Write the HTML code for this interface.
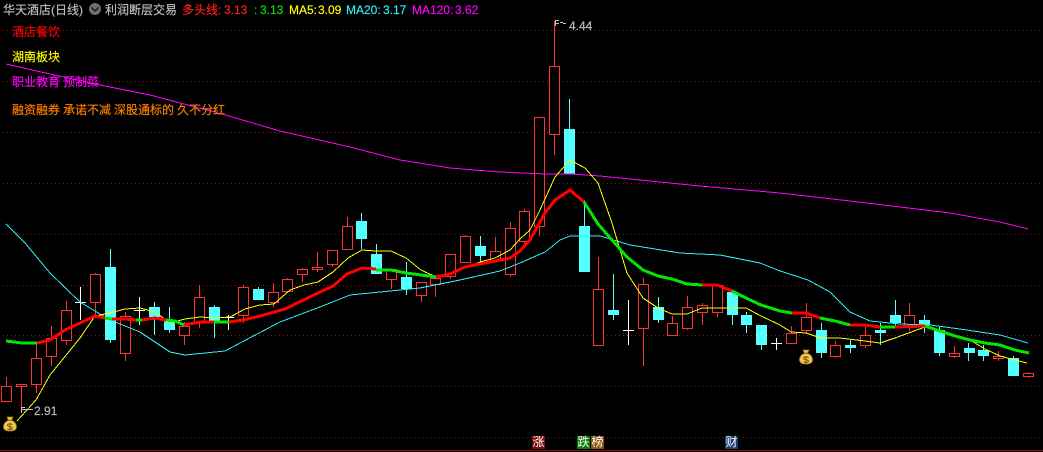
<!DOCTYPE html>
<html><head><meta charset="utf-8"><style>
html,body{margin:0;padding:0;background:#000;width:1043px;height:452px;overflow:hidden}
svg{position:absolute;left:0;top:0}
.t{position:absolute;white-space:pre;word-spacing:-.33px;-webkit-text-stroke:.15px currentColor;font:12px/14px "Liberation Sans","Noto Sans CJK SC",sans-serif}
.b{position:absolute;top:436px;width:13px;height:13px;color:#fff;text-align:center;font:12px/13px "Liberation Sans","Noto Sans CJK SC",sans-serif}
</style></head><body>
<svg width="1043" height="452" viewBox="0 0 1043 452" fill="none" shape-rendering="crispEdges">
<path stroke="#8a0f0f" stroke-dasharray="1 3" d="M3 30.5H1043M3 81.5H1043M3 132.5H1043M3 183.5H1043M3 234.5H1043M3 285.5H1043M3 335.5H1043M3 386.5H1043M3 437.5H1043"/>
<path stroke="#a00000" d="M0 450.5H1043"/>
<!-- red wicks -->
<path stroke="#ff3232" d="M6.5 377V386M21.5 387V409M36.5 342V393M51.5 326V366M66.5 301V345M95.5 273V318M125.5 312V361M184.5 322V345M199.5 285V328M243.5 285V323M273.5 283V307M287.5 278V293M302.5 268V282M317.5 252V272M332.5 250V267M347.5 217V250M391.5 269V289M421.5 282V302M435.5 275V297M450.5 254V279M465.5 235V263M495.5 237V261M510.5 222V277M524.5 209V247M539.5 117V236M554.5 21V155M598.5 257V346M643.5 278V366M672.5 316V336M687.5 296V330M702.5 303V325M717.5 285V317M791.5 326V344M806.5 303V333M835.5 341V358M865.5 325V348M909.5 303V331M954.5 346V358M998.5 351V361M1028.5 372V378"/>
<!-- red bodies -->
<path stroke="#ff3232" fill="#000" d="M1.5 386.5h10v15h-10zM16.5 384.5h10v2h-10zM31.5 358.5h10v26h-10zM46.5 338.5h10v18h-10zM61.5 310.5h10v30h-10zM90.5 274.5h10v28h-10zM120.5 316.5h10v37h-10zM179.5 326.5h10v9h-10zM194.5 297.5h10v25h-10zM238.5 287.5h10v28h-10zM268.5 292.5h10v10h-10zM282.5 279.5h10v12h-10zM297.5 269.5h10v5h-10zM312.5 267.5h10v2h-10zM327.5 250.5h10v14h-10zM342.5 226.5h10v23h-10zM386.5 269.5h10v10h-10zM416.5 282.5h10v13h-10zM430.5 278.5h10v6h-10zM445.5 254.5h10v22h-10zM460.5 236.5h10v26h-10zM490.5 251.5h10v9h-10zM505.5 228.5h10v46h-10zM519.5 211.5h10v30h-10zM534.5 117.5h10v109h-10zM549.5 66.5h10v68h-10zM593.5 289.5h10v56h-10zM638.5 284.5h10v44h-10zM667.5 323.5h10v12h-10zM682.5 307.5h10v21h-10zM697.5 305.5h10v7h-10zM712.5 285.5h10v27h-10zM786.5 333.5h10v10h-10zM801.5 317.5h10v13h-10zM830.5 345.5h10v11h-10zM860.5 335.5h10v10h-10zM904.5 315.5h10v12h-10zM949.5 353.5h10v3h-10zM993.5 356.5h10v2h-10zM1023.5 373.5h10v3h-10z"/>
<!-- cyan wicks -->
<path stroke="#54ffff" d="M110.5 249V343M154.5 302V335M169.5 307V333M214.5 305V338M258.5 287V300M361.5 213V249M376.5 244V274M406.5 262V295M480.5 236V262M569.5 99V174M584.5 200V272M613.5 274V320M658.5 297V323M732.5 292V325M746.5 312V333M761.5 325V350M821.5 323V358M850.5 340V353M880.5 323V345M895.5 300V327M924.5 315V333M939.5 327V356M968.5 343V361M983.5 345V361M1013.5 356V376"/>
<!-- cyan bodies -->
<path fill="#54ffff" d="M105 267h11v73h-11zM149 307h11v10h-11zM164 321h11v9h-11zM209 307h11v14h-11zM253 289h11v11h-11zM356 221h11v18h-11zM371 254h11v20h-11zM401 277h11v12h-11zM475 246h11v10h-11zM564 129h11v45h-11zM579 226h11v46h-11zM608 310h11v5h-11zM653 307h11v13h-11zM727 292h11v23h-11zM741 315h11v10h-11zM756 325h11v20h-11zM816 330h11v23h-11zM845 345h11v3h-11zM875 330h11v3h-11zM890 315h11v8h-11zM919 320h11v5h-11zM934 330h11v23h-11zM964 348h11v5h-11zM978 350h11v6h-11zM1008 358h11v18h-11z"/>
<!-- white crosses -->
<path stroke="#fff" d="M80.5 287V320M75 302.5H86M139.5 297V325M134 310.5H145M228.5 315V330M223 317.5H234M628.5 300V345M623 330.5H634M776.5 338V350M771 343.5H782"/>
<!-- MA120 -->
<polyline stroke="#ff00ff" stroke-width="1" points="6,64 50,74 100,85 150,95 222,114 280,131 350,147 400,160 450,168 500,172 546,174 570,174 600,176 650,181 700,186 780,193 850,201 900,207 950,213 1000,222 1028,229"/>
<!-- MA20 -->
<polyline stroke="#2ff0f8" points="6,224 25,243 50,273 80,302 110,320 140,332 170,352 185,355 225,351 259,333 280,322 320,307 350,295 380,292 420,288 460,280 500,271 520,263 545,252 560,240 570,236 600,236 630,245 680,253 720,255 760,263 780,271 808,280 830,292 850,312 870,321 900,324 930,325 960,329 1000,335 1028,343"/>
<!-- MA5 -->
<polyline stroke="#ffff00" points="17,421 36,400 50,375 80,338 95,316 110,313 125,309 140,308 155,312 170,323 185,319 200,317 215,318 230,317 245,309 260,305 274,304 290,290 304,285 318,282 333,272 348,258 362,250 376,251 391,251 406,258 421,270 436,277 450,275 465,268 480,262 495,258 510,250 520,239 530,230 540,210 555,177 570,160 585,168 598,183 612,223 627,273 643,298 658,308 672,314 687,314 702,308 717,308 746,308 761,316 780,325 791,332 806,333 821,338 840,338 865,341 880,343 895,338 925,327 940,331 970,340 985,349 1000,356 1015,360 1027,363"/>
<!-- Trend line -->
<g stroke-width="3" stroke-linejoin="round">
<polyline stroke="#00e600" points="6,341 22,343 37,343"/>
<polyline stroke="#ff0000" points="37,343 50,340 65,330 80,323 95,316 105,318"/>
<polyline stroke="#00e600" points="105,318 112,319"/>
<polyline stroke="#ff0000" points="112,319 125,319 136,320"/>
<polyline stroke="#00e600" points="136,320 142,320"/>
<polyline stroke="#ff0000" points="142,320 155,318 166,320"/>
<polyline stroke="#00e600" points="166,320 175,321 184,325"/>
<polyline stroke="#ff0000" points="184,325 200,322 214,322"/>
<polyline stroke="#00e600" points="214,322 229,322"/>
<polyline stroke="#ff0000" points="229,322 243,320 260,316 285,309 318,293 333,286 347,274 362,268 376,269"/>
<polyline stroke="#00e600" points="376,270 391,270 406,273 421,275 436,277"/>
<polyline stroke="#ff0000" points="436,277 450,274 465,267 480,264 495,261 510,258 520,251 530,240 545,213 555,200 570,190 584,202"/>
<polyline stroke="#00e600" points="584,202 598,224 612,240 627,257 643,270 658,276 672,279 687,284 702,285"/>
<polyline stroke="#ff0000" points="702,285 717,285 732,291"/>
<polyline stroke="#00e600" points="732,291 746,298 761,305 780,311 792,313"/>
<polyline stroke="#ff0000" points="792,313 806,313 820,318"/>
<polyline stroke="#00e600" points="820,318 835,321 850,325"/>
<polyline stroke="#ff0000" points="850,325 865,325 880,327"/>
<polyline stroke="#00e600" points="880,327 895,327"/>
<polyline stroke="#ff0000" points="895,327 925,326"/>
<polyline stroke="#00e600" points="925,326 940,331 955,336 970,340 985,343 1000,345 1015,350 1029,353"/>
</g>
<!-- markers -->
<path stroke="#c8c8c8" d="M555 20.5H559M555.5 20V26M556 23.5H559M560 22.5H563M563 23.5H566"/>
<path stroke="#c8c8c8" d="M21.5 407V413M22 409.5H33M22 407.5H25"/>
<!-- circle icon -->
<circle cx="95" cy="9" r="6" fill="#6e6e6e" shape-rendering="auto"/>
<path d="M91.5 7.5L95 11L98.5 7.5" stroke="#1a1a1a" stroke-width="1.5" shape-rendering="auto"/>
<!-- money bags -->
<g shape-rendering="auto">
<path d="M7 417h6l-1.5 3.2c3.2 1.4 5 3.6 5 6.5 0 3-2.6 4.3-6.5 4.3s-6.5-1.3-6.5-4.3c0-2.9 1.8-5.1 5-6.5z" fill="#f0c850" stroke="#a87a18" stroke-width=".8"/>
<path d="M7.5 420.3h5" stroke="#7a5510"/>
<path d="M12.5 424.5c-1-1-5-1-5 .8 0 2 5 .8 5 2.8 0 1.6-4 1.6-5 .6M10 423v7.5" stroke="#7a4a10" stroke-width="1"/>
</g>
<g shape-rendering="auto" transform="translate(796,-67)">
<path d="M7 417h6l-1.5 3.2c3.2 1.4 5 3.6 5 6.5 0 3-2.6 4.3-6.5 4.3s-6.5-1.3-6.5-4.3c0-2.9 1.8-5.1 5-6.5z" fill="#f0c850" stroke="#a87a18" stroke-width=".8"/>
<path d="M7.5 420.3h5" stroke="#7a5510"/>
<path d="M12.5 424.5c-1-1-5-1-5 .8 0 2 5 .8 5 2.8 0 1.6-4 1.6-5 .6M10 423v7.5" stroke="#7a4a10" stroke-width="1"/>
</g>
</svg>

<div class="t" style="left:3px;top:3px;color:#c0c0c0">华天酒店(日线)</div>
<div class="t" style="left:105px;top:3px;color:#c0c0c0">利润断层交易</div>
<div class="t" style="left:182px;top:3px;color:#ff2020">多头线:</div>
<div class="t" style="left:224px;top:3px;color:#ff2020">3.13</div>
<div class="t" style="left:254px;top:3px;color:#00e600">:</div>
<div class="t" style="left:260px;top:3px;color:#00e600">3.13</div>
<div class="t" style="left:289px;top:3px;color:#ffff00">MA5:</div>
<div class="t" style="left:318px;top:3px;color:#ffff00">3.09</div>
<div class="t" style="left:346px;top:3px;color:#2ff0f8">MA20:</div>
<div class="t" style="left:383px;top:3px;color:#2ff0f8">3.17</div>
<div class="t" style="left:412px;top:3px;color:#ff00ff">MA120:</div>
<div class="t" style="left:455px;top:3px;color:#ff00ff">3.62</div>

<div class="t" style="left:12px;top:25px;color:#ff0000">酒店餐饮</div>
<div class="t" style="left:12px;top:50px;color:#ffff00">湖南板块</div>
<div class="t" style="left:12px;top:75px;color:#ff00ff">职业教育 预制菜</div>
<div class="t" style="left:12px;top:103px;color:#ff8000">融资融券 承诺不减 深股通标的 久不分红</div>

<div class="t" style="left:569px;top:19px;color:#c0c0c0">4.44</div>
<div class="t" style="left:34px;top:404px;color:#c0c0c0">2.91</div>

<div class="b" style="left:532px;background:#7f0a0a">涨</div>
<div class="b" style="left:577px;background:#0a7a0a">跌</div>
<div class="b" style="left:591px;background:#8a5210">榜</div>
<div class="b" style="left:725px;background:#14406e">财</div>
</body></html>
